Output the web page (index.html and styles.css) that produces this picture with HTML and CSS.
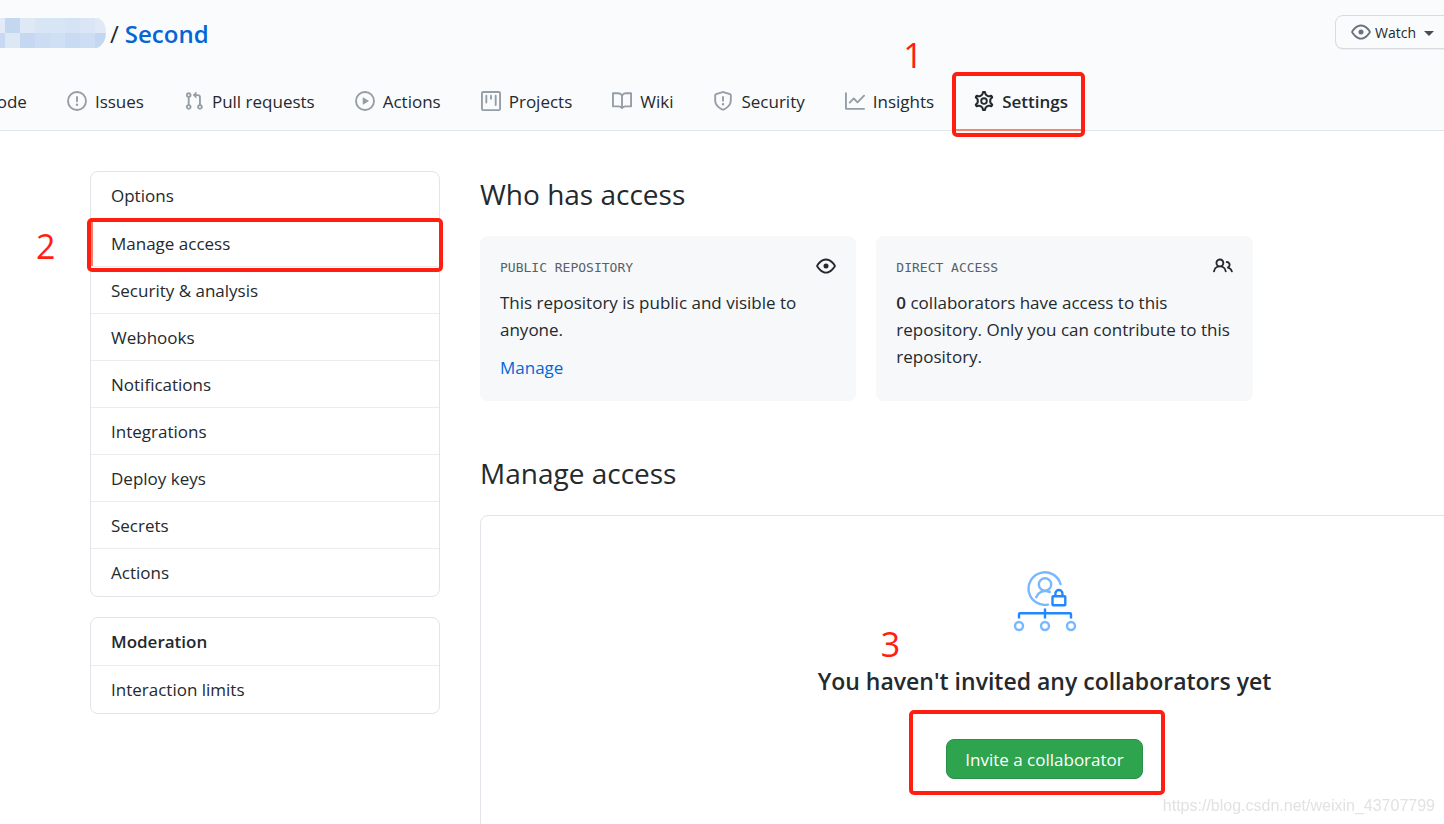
FILE: index.html
```html
<!DOCTYPE html>
<html lang="en">
<head>
<meta charset="utf-8">
<title>Manage access</title>
<link rel="stylesheet" href="styles.css">
</head>
<body>
<header class="repo-header">
  <div class="title-row">
    <div class="title">
      <svg class="owner-mask" width="106" height="30" viewBox="0 0 106 30" aria-hidden="true">
        <clipPath id="mask"><path d="M0 0H98Q106 3 106 14Q106 26 97 30H0Z"/></clipPath>
        <g clip-path="url(#mask)">
          <path fill="#e3ebf8" d="M0 0H5V15H0z"/><path fill="#c3d7f1" d="M5 0H20V15H5z"/><path fill="#dfe9f6" d="M20 0H35V15H20z"/><path fill="#d8e5f5" d="M35 0H65V15H35z"/><path fill="#d5e3f5" d="M65 0H80V15H65z"/><path fill="#dae6f6" d="M80 0H95V15H80z"/><path fill="#e0eaf7" d="M95 0H106V15H95z"/>
          <path fill="#c7d8f2" d="M0 15H5V30H0z"/><path fill="#dde8f5" d="M5 15H20V30H5z"/><path fill="#c5d7f1" d="M20 15H35V30H20z"/><path fill="#cbdcf3" d="M35 15H50V30H35z"/><path fill="#cfdff4" d="M50 15H65V30H50z"/><path fill="#c9dbf3" d="M65 15H80V30H65z"/><path fill="#ccddf4" d="M80 15H95V30H80z"/><path fill="#c3d7f2" d="M95 15H106V30H95z"/>
        </g>
      </svg>
      <span class="slash">/</span>
      <a class="repo-name" href="#">Second</a>
    </div>
    <button class="watch" type="button">
      <svg class="icon muted-dark" viewBox="0 0 16 16"><path d="M1.679 7.932c.412-.621 1.242-1.75 2.366-2.717C5.175 4.242 6.527 3.5 8 3.5c1.473 0 2.824.742 3.955 1.715 1.124.967 1.954 2.096 2.366 2.717a.119.119 0 010 .136c-.412.621-1.242 1.75-2.366 2.717C10.825 11.758 9.473 12.5 8 12.5c-1.473 0-2.824-.742-3.955-1.715C2.92 9.818 2.09 8.69 1.679 8.068a.119.119 0 010-.136zM8 2c-1.981 0-3.67.992-4.933 2.078C1.797 5.169.88 6.423.43 7.1a1.619 1.619 0 000 1.798c.45.678 1.367 1.932 2.637 3.024C4.329 13.008 6.019 14 8 14c1.981 0 3.67-.992 4.933-2.078 1.27-1.091 2.187-2.345 2.637-3.023a1.619 1.619 0 000-1.798c-.45-.678-1.367-1.932-2.637-3.023C11.671 2.992 9.981 2 8 2zm0 8a2 2 0 100-4 2 2 0 000 4z"/></svg>
      Watch
      <span class="caret"></span>
    </button>
  </div>
  <nav class="tabs" aria-label="Repository">
    <a class="tab tab-code" href="#">Code</a>
    <a class="tab" href="#"><svg class="icon" viewBox="0 0 16 16"><circle class="line" cx="8" cy="8" r="7.2"/><path d="M7.250 4.750a.75.75 0 011.5 0v3.500a.75.75 0 01-1.500 0z"/><circle cx="8" cy="11" r="1"/></svg>Issues</a>
    <a class="tab" href="#"><svg class="icon" viewBox="0 0 16 16"><path d="M7.177 3.073L9.573.677A.25.25 0 0110 .854v4.792a.25.25 0 01-.427.177L7.177 3.427a.25.25 0 010-.354zM3.75 2.5a.75.75 0 100 1.5.75.75 0 000-1.5zm-2.25.75a2.250 2.250 0 113 2.122v5.256a2.251 2.251 0 11-1.5 0V5.372A2.250 2.250 0 011.5 3.250zM11 2.5h-1V4h1a1 1 0 011 1v5.628a2.251 2.251 0 101.5 0V5A2.5 2.5 0 0011 2.5zm1 10.250a.75.75 0 111.5 0 .75.75 0 01-1.5 0zM3.75 12a.75.75 0 100 1.5.75.75 0 000-1.5z"/></svg>Pull requests</a>
    <a class="tab" href="#"><svg class="icon" viewBox="0 0 16 16"><circle class="line" cx="8" cy="8" r="7.2"/><path d="M6.200 5.400v5.200a.3.3 0 00.5.250l4.200-2.600a.3.3 0 000-.5L6.700 5.150a.3.3 0 00-.5.250z"/></svg>Actions</a>
    <a class="tab" href="#"><svg class="icon" viewBox="0 0 16 16"><rect class="line" x=".75" y=".75" width="14.5" height="14.5" rx="1"/><path class="line" stroke-linecap="round" d="M4.250 3.750v5.500M8 3.750v2.500M11.750 3.750v7.500"/></svg>Projects</a>
    <a class="tab" href="#"><svg class="icon" viewBox="0 0 16 16"><path fill-rule="evenodd" d="M0 1.75A.75.75 0 01.75 1h4.253c1.227 0 2.317.59 3 1.501A3.744 3.744 0 0111.006 1h4.245a.75.75 0 01.75.75v10.5a.75.75 0 01-.75.75h-4.507a2.25 2.25 0 00-1.591.659l-.622.621a.75.75 0 01-1.06 0l-.622-.621A2.25 2.25 0 005.258 13H.75a.75.75 0 01-.75-.75V1.75zm8.755 3a2.25 2.25 0 012.25-2.25H14.5v9h-3.757c-.71 0-1.4.201-1.992.572l.004-7.322zm-1.504 7.324l.004-5.073-.002-2.253A2.25 2.25 0 005.003 2.5H1.5v9h3.757a3.75 3.75 0 011.994.574z"/></svg>Wiki</a>
    <a class="tab" href="#"><svg class="icon" viewBox="0 0 16 16"><path d="M7.467.133a1.75 1.75 0 011.066 0l5.25 1.68A1.75 1.75 0 0115 3.48V7c0 1.566-.32 3.182-1.303 4.682-.983 1.498-2.585 2.813-5.032 3.855a1.7 1.7 0 01-1.33 0c-2.447-1.042-4.049-2.357-5.032-3.855C1.32 10.182 1 8.566 1 7V3.48a1.75 1.75 0 011.217-1.667l5.25-1.68zm.61 1.429a.25.25 0 00-.153 0l-5.25 1.68a.25.25 0 00-.174.238V7c0 1.358.275 2.666 1.057 3.86.784 1.194 2.121 2.34 4.366 3.297a.2.2 0 00.154 0c2.245-.956 3.582-2.104 4.366-3.298C13.225 9.666 13.5 8.36 13.5 7V3.48a.25.25 0 00-.174-.237l-5.25-1.68zM9 10.5a1 1 0 11-2 0 1 1 0 012 0zm-.25-5.75a.75.75 0 10-1.5 0v3a.75.75 0 001.5 0v-3z"/></svg>Security</a>
    <a class="tab" href="#"><svg class="icon" viewBox="0 0 16 16"><path d="M1.5 1.75a.75.75 0 00-1.5 0v12.5c0 .414.336.75.75.75h14.5a.75.75 0 000-1.5H1.5V1.75zm14.28 2.53a.75.75 0 00-1.06-1.06L10 7.94 7.53 5.47a.75.75 0 00-1.06 0L3.22 8.72a.75.75 0 001.06 1.06L7 7.06l2.47 2.47a.75.75 0 001.06 0l5.25-5.25z"/></svg>Insights</a>
    <a class="tab tab-current" href="#" aria-current="page"><svg class="icon" viewBox="0 0 16 16"><g class="line"><path transform="translate(8 8) scale(1.11) translate(-8 -8)" d="M7.429 1.525a6.593 6.593 0 011.142 0c.036.003.108.036.137.146l.289 1.105c.147.56.55.967.997 1.189.174.086.341.183.501.29.417.278.97.423 1.53.27l1.102-.303c.11-.03.175.016.195.046.219.31.41.641.573.989.014.031.022.11-.059.19l-.815.806c-.411.406-.562.957-.53 1.456a4.588 4.588 0 010 .582c-.032.499.119 1.05.53 1.456l.815.806c.08.08.073.159.059.19a6.494 6.494 0 01-.573.99c-.02.029-.086.074-.195.045l-1.103-.303c-.559-.153-1.112-.008-1.529.27-.16.107-.327.204-.5.29-.449.222-.851.628-.998 1.189l-.289 1.105c-.029.11-.101.143-.137.146a6.613 6.613 0 01-1.142 0c-.036-.003-.108-.037-.137-.146l-.289-1.105c-.147-.56-.55-.967-.997-1.189a4.502 4.502 0 01-.501-.29c-.417-.278-.97-.423-1.53-.27l-1.102.303c-.11.03-.175-.016-.195-.046a6.492 6.492 0 01-.573-.989c-.014-.031-.022-.11.059-.19l.815-.806c.411-.406.562-.957.53-1.456a4.587 4.587 0 010-.582c.032-.499-.119-1.05-.53-1.456l-.815-.806c-.08-.08-.073-.159-.059-.19a6.44 6.44 0 01.573-.99c.02-.029.086-.075.195-.045l1.103.303c.559.153 1.112.008 1.529-.27.16-.107.327-.204.5-.29.449-.222.851-.628.998-1.189l.289-1.105c.029-.11.101-.143.137-.146z"/><circle cx="8" cy="8" r="2.250"/></g></svg>Settings<span class="mark mark-tab"></span><span class="step step-1">1</span></a>
  </nav>
</header>

<div class="page">
  <aside class="sidebar">
    <nav class="menu" aria-label="Settings">
      <a class="menu-item" href="#">Options</a>
      <a class="menu-item selected" href="#" aria-current="page">Manage access<span class="mark mark-menu"></span><span class="step step-2">2</span></a>
      <a class="menu-item" href="#">Security &amp; analysis</a>
      <a class="menu-item" href="#">Webhooks</a>
      <a class="menu-item" href="#">Notifications</a>
      <a class="menu-item" href="#">Integrations</a>
      <a class="menu-item" href="#">Deploy keys</a>
      <a class="menu-item" href="#">Secrets</a>
      <a class="menu-item" href="#">Actions</a>
    </nav>
    <nav class="menu" aria-labelledby="moderation">
      <h3 class="menu-item menu-heading" id="moderation">Moderation</h3>
      <a class="menu-item" href="#">Interaction limits</a>
    </nav>
  </aside>

  <main class="content">
    <h2 class="heading">Who has access</h2>
    <div class="cards">
      <section class="card">
        <div class="card-top"><span class="label">PUBLIC REPOSITORY</span>
          <svg class="icon dark" viewBox="0 0 16 16"><path d="M1.679 7.932c.412-.621 1.242-1.75 2.366-2.717C5.175 4.242 6.527 3.5 8 3.5c1.473 0 2.824.742 3.955 1.715 1.124.967 1.954 2.096 2.366 2.717a.119.119 0 010 .136c-.412.621-1.242 1.75-2.366 2.717C10.825 11.758 9.473 12.5 8 12.5c-1.473 0-2.824-.742-3.955-1.715C2.92 9.818 2.09 8.69 1.679 8.068a.119.119 0 010-.136zM8 2c-1.981 0-3.67.992-4.933 2.078C1.797 5.169.88 6.423.43 7.1a1.619 1.619 0 000 1.798c.45.678 1.367 1.932 2.637 3.024C4.329 13.008 6.019 14 8 14c1.981 0 3.67-.992 4.933-2.078 1.27-1.091 2.187-2.345 2.637-3.023a1.619 1.619 0 000-1.798c-.45-.678-1.367-1.932-2.637-3.023C11.671 2.992 9.981 2 8 2zm0 8a2 2 0 100-4 2 2 0 000 4z"/></svg>
        </div>
        <p class="card-text">This repository is public and visible to anyone.</p>
        <a class="link" href="#">Manage</a>
      </section>
      <section class="card">
        <div class="card-top"><span class="label">DIRECT ACCESS</span>
          <svg class="icon dark" viewBox="0 0 16 16"><path d="M5.5 3.5a2 2 0 100 4 2 2 0 000-4zM2 5.5a3.5 3.5 0 115.898 2.549 5.507 5.507 0 013.034 4.084.75.75 0 11-1.482.235 4.001 4.001 0 00-7.9 0 .75.75 0 01-1.482-.236A5.507 5.507 0 013.102 8.05 3.49 3.49 0 012 5.5zM11 4a.75.75 0 100 1.5 1.5 1.5 0 01.666 2.844.75.75 0 00-.416.672v.352a.75.75 0 00.574.73c1.2.289 2.162 1.2 2.522 2.372a.75.75 0 101.434-.44 5.01 5.01 0 00-2.56-3.012A3 3 0 0011 4z"/></svg>
        </div>
        <p class="card-text"><strong>0</strong> collaborators have access to this repository. Only you can contribute to this repository.</p>
      </section>
    </div>

    <h2 class="heading">Manage access</h2>
    <section class="blank">
      <svg class="art" width="64" height="64" viewBox="0 0 64 64" fill="none" stroke-width="2.400" aria-hidden="true">
        <g stroke="#79b8ff" stroke-linecap="round">
          <path d="M47.500 14A16.300 16.300 0 1 0 35 34.600"/>
          <circle cx="32" cy="14.500" r="6.200"/>
          <path d="M23.200 27.200C25 22.500 30 19.500 36.800 22"/>
          <circle cx="6" cy="56" r="4"/><circle cx="32" cy="56" r="4"/><circle cx="58" cy="56" r="4"/>
        </g>
        <g stroke="#2188ff">
          <rect x="39.500" y="26.300" width="12.800" height="9" rx=".8"/>
          <path d="M42.400 26V23.500a3.500 3.500 0 0 1 7 0V26"/>
          <path d="M32 38.500V48.500M6 48.500V44.200a1 1 0 0 1 1-1H57a1 1 0 0 1 1 1V48.500"/>
        </g>
      </svg>
      <h3 class="blank-title">You haven't invited any collaborators yet<span class="step step-3">3</span></h3>
      <div class="invite-wrap">
        <button class="invite" type="button">Invite a collaborator</button>
        <span class="mark mark-invite"></span>
      </div>
    </section>
  </main>
</div>
<div class="watermark">https://blog.csdn.net/weixin_43707799</div>
</body>
</html>
```
FILE: styles.css
```css
* { box-sizing: border-box; }

body {
  margin: 0;
  min-height: 100vh;
  overflow: hidden;
  background: #fff;
  color: #24292e;
  font-family: "Open Sans", "Noto Sans", sans-serif;
  font-size: 17px;
  line-height: 27px;
}

a { color: inherit; text-decoration: none; }
h2, h3, p { margin: 0; }

.icon { width: 20px; height: 20px; flex: none; fill: currentColor; }
.line { fill: none; stroke: currentColor; stroke-width: 1.5; }
.dark { color: #24292e; }
.muted-dark { color: #6a737d; }

/* Header */
.repo-header {
  background: #fafbfd;
  border-bottom: 1px solid #e1e4e8;
}
.title-row {
  display: flex;
  justify-content: space-between;
  padding-top: 15px;
}
.title {
  display: flex;
  align-items: center;
  height: 36px;
  font-size: 24px;
}
.owner-mask { margin-right: 4px; }
.slash { margin-right: 6px; }
.repo-name { color: #0366d6; font-weight: 600; }

.watch {
  display: flex;
  align-items: center;
  gap: 4px;
  height: 34px;
  margin-right: -9px;
  padding: 0 18px 0 15px;
  border: 1px solid #d9dcdf;
  border-radius: 8px;
  background: #fafbfc;
  box-shadow: 0 1px 0 #eeeff1;
  color: #24292e;
  font: inherit;
  font-size: 14px;
}
.caret {
  margin: 3px 0 0 4px;
  border: 5px solid transparent;
  border-top-color: #444d56;
  border-bottom-width: 0;
}

.tabs {
  display: flex;
  gap: 40px;
  margin-left: -14px;
  padding-top: 21px;
}
.tab {
  position: relative;
  display: flex;
  align-items: center;
  gap: 8px;
  height: 58px;
  white-space: nowrap;
}
.tab .icon { color: #959da5; }
.tab-current { font-weight: 600; }
.tab-current .icon { color: #24292e; }

/* Layout */
.page {
  display: grid;
  grid-template-columns: 350px minmax(0, 1fr);
  gap: 40px;
  margin-right: -165px;
  padding: 40px 0 0 90px;
}

/* Sidebar */
.menu {
  margin-bottom: 20px;
  border: 1px solid #e1e4e8;
  border-radius: 8px;
}
.menu-item {
  position: relative;
  display: block;
  padding: 10px 20px 9px;
  border-bottom: 1px solid #eaecef;
  font-size: 17px;
}
.menu-item:first-child { padding-bottom: 10px; }
.menu-item:last-child { padding-bottom: 10px; border-bottom: 0; }
.menu-heading { font-weight: 600; }
.selected { box-shadow: inset 2px 0 #f9826c; }

/* Content */
.heading {
  margin-bottom: 18px;
  font-size: 28px;
  font-weight: 400;
  line-height: 47px;
}
.cards {
  display: grid;
  grid-template-columns: repeat(3, 1fr);
  gap: 20px;
  margin: 0 -40px 49px 0;
}
.card {
  min-height: 165px;
  padding: 20px;
  border-radius: 8px;
  background: #f6f8fa;
}
.card-top {
  display: flex;
  justify-content: space-between;
  height: 33px;
}
.label {
  padding-top: 2px;
  color: #586069;
  font-family: "DejaVu Sans Mono", monospace;
  font-size: 13px;
  line-height: 20px;
}
.card-text { margin-bottom: 11px; }
.card strong { font-weight: 600; }
.link { color: #0366d6; }

.blank {
  display: flex;
  flex-direction: column;
  align-items: center;
  padding: 54px 40px 90px;
  border: 1px solid #e1e4e8;
  border-radius: 8px;
}
.blank-title {
  position: relative;
  margin: 29px 0 39px;
  font-size: 23px;
  font-weight: 600;
  line-height: 37px;
}
.invite-wrap { position: relative; }
.invite {
  height: 40px;
  padding: 0 18px;
  border: 1px solid #2a8f47;
  border-radius: 8px;
  background: #2ea44f;
  color: #fff;
  font: inherit;
}

/* Tutorial marks drawn over the page */
.mark {
  position: absolute;
  border: 4px solid #ff1e10;
  border-radius: 5px;
  pointer-events: none;
}
.mark-tab {
  inset: 0 -17px -7px -22px;
}
.mark-tab::after {
  content: "";
  position: absolute;
  right: 0;
  bottom: 2px;
  left: 0;
  height: 2px;
  background: #f9826c;
}
.mark-menu { inset: -2px -4px -6px -4px; }
.mark-invite { inset: -29px -22px -16px -37px; }
.step {
  position: absolute;
  color: #ff1e10;
  font-family: "Open Sans", sans-serif;
  font-size: 34px;
  font-weight: 400;
  line-height: 34px;
}
.step-1 { top: -34px; left: -71px; }
.step-2 { top: 9px; left: -55px; }
.step-3 { top: -36px; left: 63px; }

.watermark {
  position: fixed;
  right: 9px;
  bottom: 5px;
  color: #e2e2e2;
  font-family: "Liberation Sans", sans-serif;
  font-size: 16px;
}
```
